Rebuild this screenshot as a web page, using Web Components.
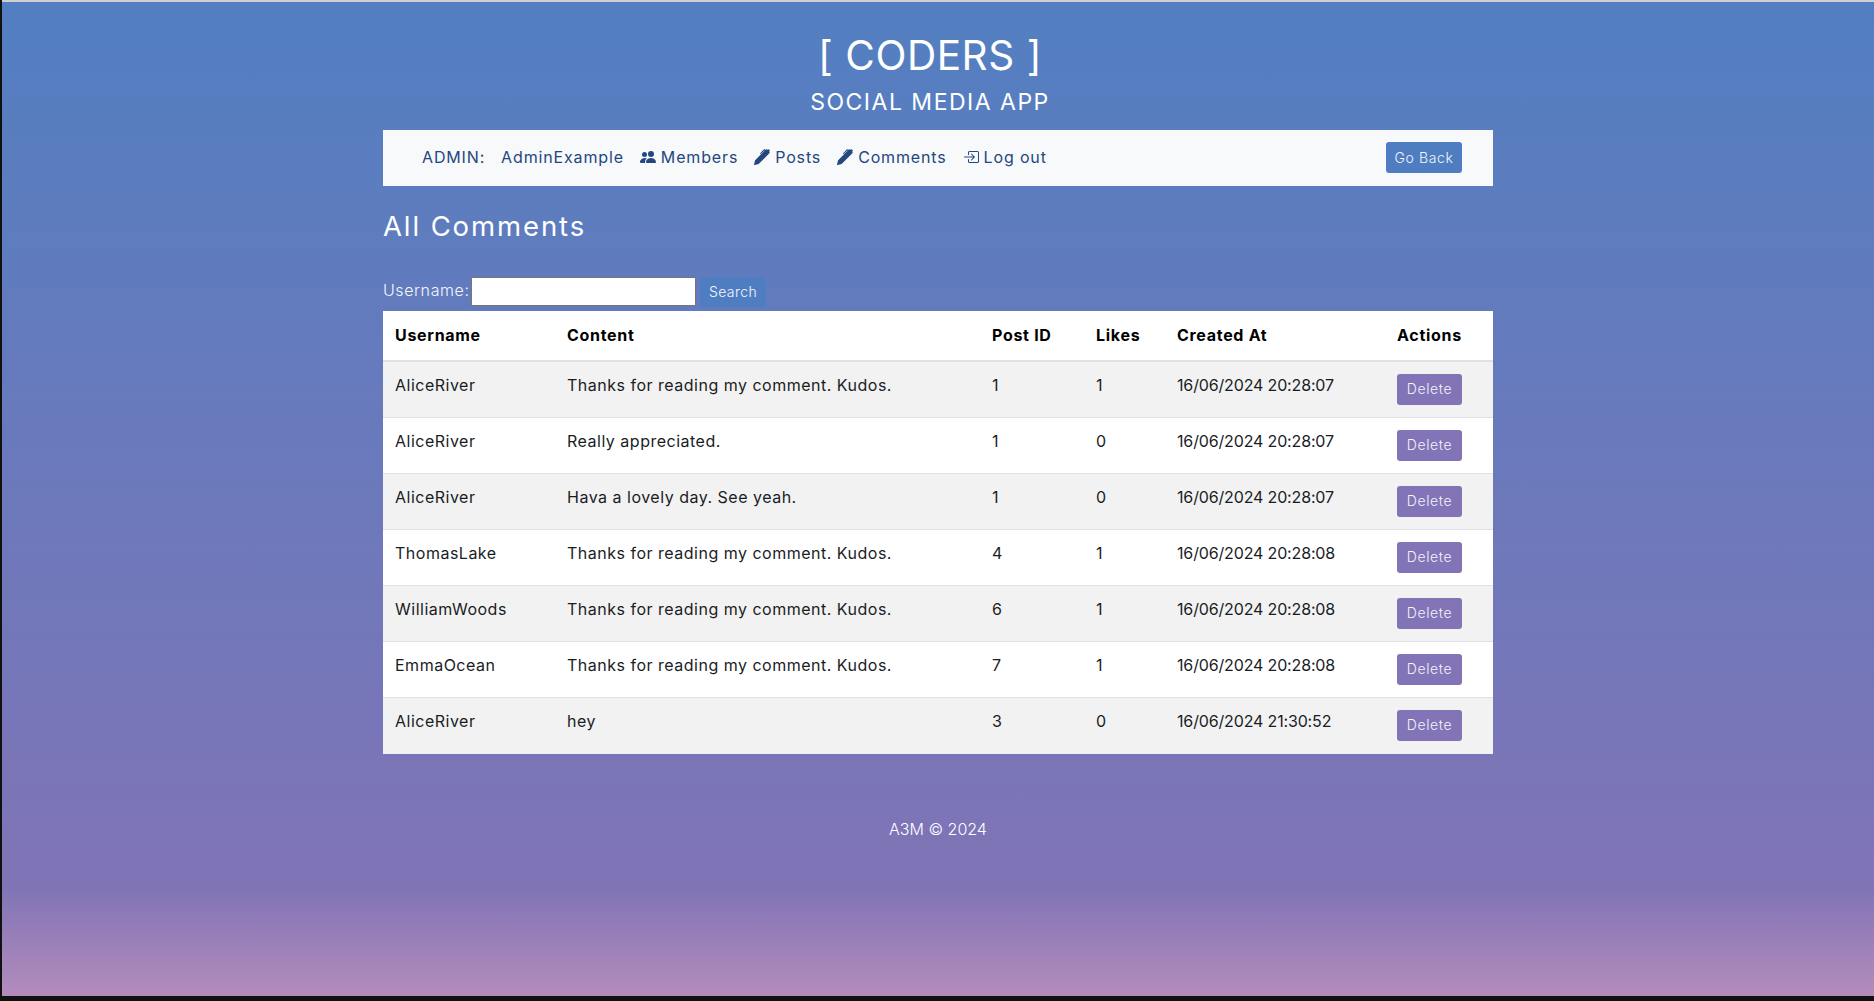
<!DOCTYPE html>
<html lang="en">
<head>
<meta charset="utf-8">
<title>Coders</title>
<style>
html, body { margin: 0; height: 100%; background: #111; }
body { font-family: Inter, "Liberation Sans", sans-serif; overflow: hidden; }
</style>
</head>
<body>
<app-page>
  <site-header slot="header"></site-header>
  <admin-nav slot="nav" data-admin="AdminExample"></admin-nav>
  <comment-search slot="search"></comment-search>
  <comment-table slot="table">
    <comment-row data-user="AliceRiver" data-content="Thanks for reading my comment. Kudos." data-post="1" data-likes="1" data-created="16/06/2024 20:28:07"></comment-row>
    <comment-row data-user="AliceRiver" data-content="Really appreciated." data-post="1" data-likes="0" data-created="16/06/2024 20:28:07"></comment-row>
    <comment-row data-user="AliceRiver" data-content="Hava a lovely day. See yeah." data-post="1" data-likes="0" data-created="16/06/2024 20:28:07"></comment-row>
    <comment-row data-user="ThomasLake" data-content="Thanks for reading my comment. Kudos." data-post="4" data-likes="1" data-created="16/06/2024 20:28:08"></comment-row>
    <comment-row data-user="WilliamWoods" data-content="Thanks for reading my comment. Kudos." data-post="6" data-likes="1" data-created="16/06/2024 20:28:08"></comment-row>
    <comment-row data-user="EmmaOcean" data-content="Thanks for reading my comment. Kudos." data-post="7" data-likes="1" data-created="16/06/2024 20:28:08"></comment-row>
    <comment-row data-user="AliceRiver" data-content="hey" data-post="3" data-likes="0" data-created="16/06/2024 21:30:52"></comment-row>
  </comment-table>
</app-page>

<script>
// shared grid for the table, header and rows have to line up
const COLUMNS = "172px 425px 104px 81px 220px 108px";

class AppPage extends HTMLElement {
  constructor() {
    super();
    this.attachShadow({ mode: "open" });
    this.shadowRoot.innerHTML = `
    <style>
    :host {
      display: block;
      height: 996px;
      margin-left: 2px;
      border-top: 2px solid #d0d0d0;
      box-sizing: border-box;
      background: linear-gradient(#527fc1 0%, #8074b6 89%, #b48cbc 100%);
      color: #fff;
    }
    .wrap { width: 1110px; margin: 0 auto; }
    h2 {
      margin: 0;
      padding: 23px 0 34px;
      font-size: 27.5px;
      font-weight: 400;
      line-height: 34px;
      letter-spacing: 1.9px;
    }
    footer {
      margin-top: 63px;
      text-align: center;
      font-size: 16px;
      font-weight: 350;
      line-height: 24px;
    }
    </style>
    <slot name="header"></slot>
    <div class="wrap">
      <slot name="nav"></slot>
      <h2>All Comments</h2>
      <slot name="search"></slot>
      <slot name="table"></slot>
      <footer>A3M © 2024</footer>
    </div>`;
  }
}

class SiteHeader extends HTMLElement {
  constructor() {
    super();
    this.attachShadow({ mode: "open" });
    this.shadowRoot.innerHTML = `
    <style>
    :host { display: block; text-align: center; padding: 26px 16px 0 0; height: 102px; }
    h1 { margin: 0; font-size: 40.5px; font-weight: 400; line-height: 56px; letter-spacing: 0.55px; }
    p { margin: 2px 0 0; font-size: 23px; line-height: 32px; letter-spacing: 1.5px; }
    </style>
    <h1>[ CODERS ]</h1>
    <p>SOCIAL MEDIA APP</p>`;
  }
}

class AdminNav extends HTMLElement {
  constructor() {
    super();
    this.attachShadow({ mode: "open" });
    const admin = this.dataset.admin || "Admin";
    this.shadowRoot.innerHTML = `
    <style>
    :host {
      display: flex;
      align-items: center;
      height: 56px;
      padding: 0 31px 0 39px;
      background: #f8f9fa;
      color: #23477f;
      font-size: 16px;
    }
    .links { display: flex; align-items: center; gap: 16px; flex: 1; margin-bottom: 2px; letter-spacing: 0.85px; }
    a { display: inline-flex; align-items: center; gap: 5px; white-space: nowrap; }
    svg { width: 16px; height: 16px; fill: currentColor; }
    .back {
      width: 76px;
      height: 31px;
      margin-bottom: 1px;
      line-height: 31px;
      text-align: center;
      border-radius: 3px;
      background: #4f7dc1;
      color: #f4f6fb;
      font-size: 14px;
      font-weight: 350;
      letter-spacing: 0.6px;
    }
    </style>
    <div class="links">
      <span>ADMIN:</span>
      <a>${admin}</a>
      <a><svg viewBox="0 0 16 16"><path d="M7 14s-1 0-1-1 1-4 5-4 5 3 5 4-1 1-1 1H7zm4-6a3 3 0 1 0 0-6 3 3 0 0 0 0 6zm-5.784 6A2.238 2.238 0 0 1 5 13c0-1.355.68-2.75 1.936-3.72A6.325 6.325 0 0 0 5 9c-4 0-5 3-5 4s1 1 1 1h4.216zM4.5 8a2.5 2.5 0 1 0 0-5 2.5 2.5 0 0 0 0 5z"/></svg>Members</a>
      <a><svg viewBox="0 0 16 16"><path d="m13.498.795.149-.149a1.207 1.207 0 1 1 1.707 1.708l-.149.148a1.5 1.5 0 0 1-.059 2.059L4.854 14.854a.5.5 0 0 1-.233.131l-4 1a.5.5 0 0 1-.606-.606l1-4a.5.5 0 0 1 .131-.232l9.642-9.642a.5.5 0 0 0-.642.056L6.854 4.854a.5.5 0 1 1-.708-.708L9.44.854A1.5 1.5 0 0 1 11.5.796a1.5 1.5 0 0 1 1.998-.001z"/></svg>Posts</a>
      <a><svg viewBox="0 0 16 16"><path d="m13.498.795.149-.149a1.207 1.207 0 1 1 1.707 1.708l-.149.148a1.5 1.5 0 0 1-.059 2.059L4.854 14.854a.5.5 0 0 1-.233.131l-4 1a.5.5 0 0 1-.606-.606l1-4a.5.5 0 0 1 .131-.232l9.642-9.642a.5.5 0 0 0-.642.056L6.854 4.854a.5.5 0 1 1-.708-.708L9.44.854A1.5 1.5 0 0 1 11.5.796a1.5 1.5 0 0 1 1.998-.001z"/></svg>Comments</a>
      <a><svg viewBox="0 0 16 16"><path fill-rule="evenodd" d="M6 3.5a.5.5 0 0 1 .5-.5h8a.5.5 0 0 1 .5.5v9a.5.5 0 0 1-.5.5h-8a.5.5 0 0 1-.5-.5v-2a.5.5 0 0 0-1 0v2A1.5 1.5 0 0 0 6.5 14h8a1.5 1.5 0 0 0 1.5-1.5v-9A1.5 1.5 0 0 0 14.5 2h-8A1.5 1.5 0 0 0 5 3.5v2a.5.5 0 0 0 1 0v-2z"/><path fill-rule="evenodd" d="M11.854 8.354a.5.5 0 0 0 0-.708l-3-3a.5.5 0 1 0-.708.708L10.293 7.5H1.5a.5.5 0 0 0 0 1h8.793l-2.147 2.146a.5.5 0 0 0 .708.708l3-3z"/></svg>Log out</a>
    </div>
    <span class="back">Go Back</span>`;
  }
}

class CommentSearch extends HTMLElement {
  constructor() {
    super();
    this.attachShadow({ mode: "open" });
    this.shadowRoot.innerHTML = `
    <style>
    :host { display: flex; align-items: flex-start; height: 30px; margin-bottom: 4px; font-size: 16px; font-weight: 350; color: #f4f5fb; }
    span { width: 88px; line-height: 26px; letter-spacing: 0.6px; white-space: nowrap; }
    input {
      width: 225px;
      height: 29px;
      margin-right: 4px;
      padding: 0;
      box-sizing: border-box;
      border: 1px solid #767676;
      border-radius: 0;
      background: #fff;
    }
    button {
      height: 30px;
      width: 66px;
      padding: 0 0 2px;
      border: 0;
      border-radius: 3px;
      background: #4f7dc1;
      color: #f4f6fb;
      font: inherit;
      font-size: 14px;
      letter-spacing: 0.4px;
    }
    </style>
    <span>Username:</span><input type="text"><button>Search</button>`;
  }
}

class CommentTable extends HTMLElement {
  constructor() {
    super();
    this.attachShadow({ mode: "open" });
    this.shadowRoot.innerHTML = `
    <style>
    :host { display: block; background: #fff; color: #1a1c1f; font-size: 16px; }
    .head {
      display: grid;
      grid-template-columns: ${COLUMNS};
      align-items: center;
      height: 48px;
      padding-bottom: 1px;
      border-bottom: 2px solid #dee2e6;
      font-weight: 700;
      color: #000;
      letter-spacing: 0.7px;
    }
    .head span { padding-left: 12px; }
    </style>
    <div class="head">
      <span>Username</span><span>Content</span><span>Post ID</span><span>Likes</span><span>Created At</span><span>Actions</span>
    </div>
    <slot></slot>`;
  }
}

class CommentRow extends HTMLElement {
  constructor() {
    super();
    this.attachShadow({ mode: "open" });
  }
  connectedCallback() {
    const d = this.dataset;
    this.shadowRoot.innerHTML = `
    <style>
    :host {
      display: grid;
      grid-template-columns: ${COLUMNS};
      height: 56px;
      box-sizing: border-box;
      border-bottom: 1px solid #dee2e6;
      letter-spacing: 0.5px;
    }
    :host(:nth-child(odd)) { background: #f2f2f2; }
    :host(:last-child) { border-bottom: 0; }
    span { padding: 11px 0 0 12px; line-height: 24px; }
    .date { letter-spacing: -0.15px; }
    button {
      height: 31px;
      width: 65px;
      margin: 12px 0 0 12px;
      padding: 0 0 2px;
      border: 0;
      border-radius: 3px;
      background: #8274b6;
      color: #f4f2fa;
      font: inherit;
      font-size: 14px;
      font-weight: 350;
      letter-spacing: 0.6px;
    }
    </style>
    <span>${d.user}</span><span>${d.content}</span><span>${d.post}</span><span>${d.likes}</span><span class="date">${d.created}</span>
    <div><button>Delete</button></div>`;
  }
}

customElements.define("app-page", AppPage);
customElements.define("site-header", SiteHeader);
customElements.define("admin-nav", AdminNav);
customElements.define("comment-search", CommentSearch);
customElements.define("comment-table", CommentTable);
customElements.define("comment-row", CommentRow);
</script>
</body>
</html>
